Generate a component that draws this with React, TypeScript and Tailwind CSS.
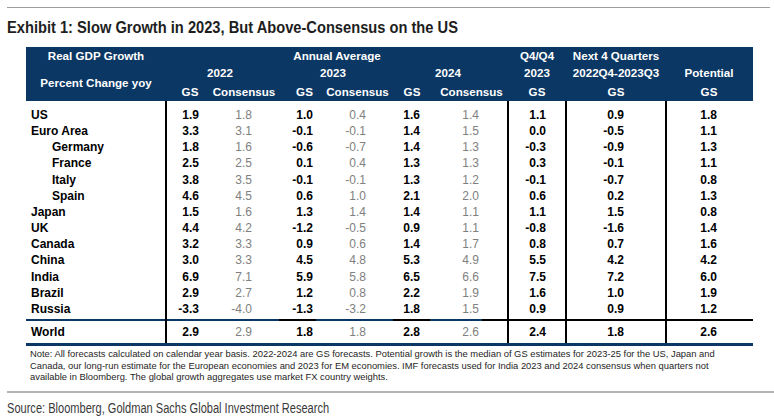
const BLUE = "#0b3764";

type Row = { name: string; indent?: boolean; v: string[] };

const rows: Row[] = [
  { name: "US", v: ["1.9", "1.8", "1.0", "0.4", "1.6", "1.4", "1.1", "0.9", "1.8"] },
  { name: "Euro Area", v: ["3.3", "3.1", "-0.1", "-0.1", "1.4", "1.5", "0.0", "-0.5", "1.1"] },
  { name: "Germany", indent: true, v: ["1.8", "1.6", "-0.6", "-0.7", "1.4", "1.3", "-0.3", "-0.9", "1.3"] },
  { name: "France", indent: true, v: ["2.5", "2.5", "0.1", "0.4", "1.3", "1.3", "0.3", "-0.1", "1.1"] },
  { name: "Italy", indent: true, v: ["3.8", "3.5", "-0.1", "-0.1", "1.3", "1.2", "-0.1", "-0.7", "0.8"] },
  { name: "Spain", indent: true, v: ["4.6", "4.5", "0.6", "1.0", "2.1", "2.0", "0.6", "0.2", "1.3"] },
  { name: "Japan", v: ["1.5", "1.6", "1.3", "1.4", "1.4", "1.1", "1.1", "1.5", "0.8"] },
  { name: "UK", v: ["4.4", "4.2", "-1.2", "-0.5", "0.9", "1.1", "-0.8", "-1.6", "1.4"] },
  { name: "Canada", v: ["3.2", "3.3", "0.9", "0.6", "1.4", "1.7", "0.8", "0.7", "1.6"] },
  { name: "China", v: ["3.0", "3.3", "4.5", "4.8", "5.3", "4.9", "5.5", "4.2", "4.2"] },
  { name: "India", v: ["6.9", "7.1", "5.9", "5.8", "6.5", "6.6", "7.5", "7.2", "6.0"] },
  { name: "Brazil", v: ["2.9", "2.7", "1.2", "0.8", "2.2", "1.9", "1.6", "1.0", "1.9"] },
  { name: "Russia", v: ["-3.3", "-4.0", "-1.3", "-3.2", "1.8", "1.5", "0.9", "0.9", "1.2"] },
];

const world = ["2.9", "2.9", "1.8", "1.8", "2.8", "2.6", "2.4", "1.8", "2.6"];

const gs = "text-right font-bold text-black";
const cons = "text-right font-normal text-[#808080]";

// one vertical group of the body; render(i) draws row i (-1 = World)
function Group({
  className,
  sep,
  render,
}: {
  className: string;
  sep: React.ReactNode;
  render: (i: number) => React.ReactNode;
}) {
  return (
    <div className={`flex flex-col pt-[6px] ${className}`}>
      {rows.map((_, i) => (
        <div key={i} className="h-[16.17px] leading-[16.17px]">
          {render(i)}
        </div>
      ))}
      <div className="mt-[1.6px] flex h-[2px]">{sep}</div>
      <div className="h-[22.3px] pt-[2px] leading-[19px]">{render(-1)}</div>
    </div>
  );
}

export default function App() {
  const val = (i: number) => (i < 0 ? world : rows[i].v);

  return (
    <div className="w-[774px] h-[420px] bg-white overflow-hidden font-['Liberation_Sans',Arial,sans-serif] text-black">
      <div className="ml-[7px] mr-[4px] mt-[7px] h-px bg-[#9c9c9c]" />

      {/* Title (condensed) */}
      <h1 className="ml-[7px] mt-[9.5px] h-[20px] leading-[20px] text-[16.8px] font-bold text-[#1e1e1e] whitespace-nowrap origin-left scale-x-[0.874]">
        Exhibit 1: Slow Growth in 2023, But Above-Consensus on the US
      </h1>

      <div className="ml-[26px] mt-[9.5px] w-[727px]">
        {/* Header */}
        <div
          className="grid h-[54px] grid-cols-[140px_12px_24px_84px_37px_69px_40px_79px_52px_106px_80px_4px] grid-rows-[17px_18px_19px] text-[11.6px] font-bold text-white"
          style={{ backgroundColor: BLUE }}
        >
          <div className="col-start-1 row-start-1 flex items-center justify-center">Real GDP Growth</div>
          <div className="col-start-1 row-start-2 row-span-2 flex items-center justify-center">Percent Change yoy</div>

          <div className="col-start-3 col-span-6 row-start-1 flex items-center justify-center pr-[15px]">Annual Average</div>
          <div className="col-start-3 col-span-2 row-start-2 flex items-center justify-center pr-[24px]">2022</div>
          <div className="col-start-5 col-span-2 row-start-2 flex items-center justify-center pr-[12px]">2023</div>
          <div className="col-start-7 col-span-2 row-start-2 flex items-center justify-center pr-[7px]">2024</div>

          {["GS", "Consensus", "GS", "Consensus", "GS", "Consensus"].map((t, i) => (
            <div key={i} className="row-start-3 flex items-center justify-center" style={{ gridColumnStart: i + 3 }}>
              {t}
            </div>
          ))}

          <div className="col-start-9 row-start-1 flex items-center justify-center">Q4/Q4</div>
          <div className="col-start-9 row-start-2 flex items-center justify-center">2023</div>
          <div className="col-start-9 row-start-3 flex items-center justify-center">GS</div>

          <div className="col-start-10 row-start-1 flex items-center justify-center">Next 4 Quarters</div>
          <div className="col-start-10 row-start-2 flex items-center justify-center">2022Q4-2023Q3</div>
          <div className="col-start-10 row-start-3 flex items-center justify-center">GS</div>

          <div className="col-start-11 row-start-2 flex items-center justify-center">Potential</div>
          <div className="col-start-11 row-start-3 flex items-center justify-center">GS</div>
        </div>

        {/* Body */}
        <div className="flex text-[12px]">
          <Group
            className="w-[139px]"
            sep={<div className="w-full" style={{ backgroundColor: BLUE }} />}
            render={(i) => (
              <div className={`font-bold ${i >= 0 && rows[i].indent ? "pl-[26px]" : "pl-[5px]"}`}>
                {i < 0 ? "World" : rows[i].name}
              </div>
            )}
          />
          <Group
            className="w-[342px] border-l-2 border-black"
            sep={
              <>
                <div className="w-[112px]" style={{ backgroundColor: BLUE }} />
                <div className="w-[37px] bg-black" />
                <div className="w-[77px]" style={{ backgroundColor: BLUE }} />
                <div className="w-[37px] bg-black" />
                <div className="w-[52px]" style={{ backgroundColor: BLUE }} />
                <div className="w-[25px] bg-black" />
              </>
            }
            render={(i) => (
              <div className="grid grid-cols-[32px_53px_61px_53px_54px_59px_28px]">
                {val(i)
                  .slice(0, 6)
                  .map((x, k) => (
                    <div key={k} className={k % 2 === 0 ? gs : cons}>
                      {x}
                    </div>
                  ))}
              </div>
            )}
          />
          <Group
            className="w-[58px] border-l-2 border-black"
            sep={<div className="w-full bg-black" />}
            render={(i) => <div className={`w-[37px] ${gs}`}>{val(i)[6]}</div>}
          />
          <Group
            className="w-[100px] border-l-2 border-black"
            sep={<div className="w-full bg-black" />}
            render={(i) => <div className={`w-[57px] ${gs}`}>{val(i)[7]}</div>}
          />
          <Group
            className="w-[88px] border-l-2 border-black"
            sep={<div className="w-full bg-black" />}
            render={(i) => <div className={`w-[50px] ${gs}`}>{val(i)[8]}</div>}
          />
        </div>
        <div className="h-[3px]" style={{ backgroundColor: BLUE }} />

        {/* Note */}
        <p className="mt-[2px] pl-[4px] text-[9.4px] leading-[11.7px] text-[#1e1e1e] whitespace-nowrap">
          Note: All forecasts calculated on calendar year basis. 2022-2024 are GS forecasts. Potential growth is the median of GS estimates for 2023-25 for the US, Japan and
          <br />
          Canada, our long-run estimate for the European economies and 2023 for EM economies. IMF forecasts used for India 2023 and 2024 consensus when quarters not
          <br />
          available in Bloomberg. The global growth aggregates use market FX country weights.
        </p>
      </div>

      <div className="ml-[7px] mt-[8px] h-[2px] bg-[#b4b4b4]" />
      <div className="ml-[7px] mt-[7px] text-[14px] leading-[16px] text-[#3a3a3a] whitespace-nowrap origin-left scale-x-[0.79]">
        Source: Bloomberg, Goldman Sachs Global Investment Research
      </div>
    </div>
  );
}
